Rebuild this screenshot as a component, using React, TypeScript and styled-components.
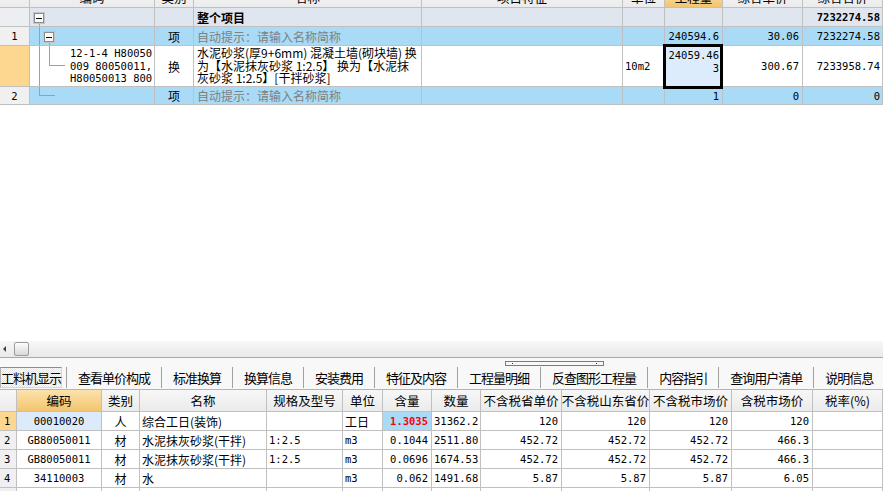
import styled, { createGlobalStyle } from 'styled-components';

const GlobalStyle = createGlobalStyle`
  html, body {
    margin: 0;
    padding: 0;
    background: #ffffff;
    overflow: hidden;
  }
  body {
    font-family: "Noto Sans CJK SC", sans-serif;
    color: #000;
  }
`;

const CJK = `"Noto Sans CJK SC", sans-serif`;
const MONO = `"DejaVu Sans Mono", "Noto Sans CJK SC", monospace`;
const GRID = '#c0c0c0';
const HEAD_BG = 'linear-gradient(#f7f7f7, #ebebeb)';
const ORANGE_HEAD = 'linear-gradient(#fbe2ae, #f4c56f)';
const ORANGE_ROW = '#fdd690';
const BLUE_ROW = '#a9dbf7';
const TOTAL_ROW = '#dfe6ef';
const NUM_BG = '#f0f0f0';

type Align = 'left' | 'center' | 'right';

const justify = (a?: Align) =>
  a === 'right' ? 'flex-end' : a === 'center' ? 'center' : 'flex-start';

const Page = styled.div`
  width: 883px;
  height: 491px;
  display: flex;
  flex-direction: column;
  overflow: hidden;
`;

const TopPane = styled.div`
  flex: none;
  height: 341px;
  overflow: hidden;
`;

const TopGrid = styled.div`
  display: grid;
  grid-template-columns: 30px 125px 39px 228px 201px 42px 58px 80px 80px;
  grid-template-rows: 20px 19px 19px 41px 18px;
  margin-top: -12px;
`;

const Cell = styled.div<{
  $align?: Align;
  $bg?: string;
  $mono?: boolean;
  $muted?: boolean;
  $bold?: boolean;
  $pad?: number;
}>`
  box-sizing: border-box;
  position: relative;
  display: flex;
  align-items: center;
  justify-content: ${(p) => justify(p.$align)};
  padding: 0 ${(p) => p.$pad ?? 3}px;
  border-right: 1px solid ${GRID};
  border-bottom: 1px solid ${GRID};
  background: ${(p) => p.$bg ?? 'transparent'};
  color: ${(p) => (p.$muted ? '#808080' : '#000')};
  font-family: ${(p) => (p.$mono ? MONO : CJK)};
  font-size: ${(p) => (p.$mono ? '10.5px' : '12px')};
  font-weight: ${(p) => (p.$bold ? 700 : 400)};
  white-space: nowrap;
  overflow: hidden;
`;

const HeadCell = styled(Cell)`
  background: ${(p) => p.$bg ?? HEAD_BG};
  font-size: 12.5px;
`;

const Lines = styled.div<{ $indent?: number }>`
  padding-left: ${(p) => p.$indent ?? 0}px;
  line-height: 12.5px;
  white-space: nowrap;
  & span {
    display: block;
    height: 12.5px;
  }
`;

const Selected = styled(Cell)`
  flex-direction: column;
  align-items: flex-end;
  justify-content: flex-start;
  padding-top: 3px;
  line-height: 12.5px;
  background: #dcecfc;
  overflow: visible;
  z-index: 1;
  &::after {
    content: '';
    position: absolute;
    top: -2px;
    bottom: -3px;
    left: -2px;
    right: -1px;
    border: 3px solid #000;
    pointer-events: none;
  }
`;

const Twig = styled.svg`
  position: absolute;
  left: 0;
  top: 0;
  width: 40px;
  height: 100%;
  overflow: visible;
  shape-rendering: crispEdges;
`;

const HScroll = styled.div`
  flex: none;
  height: 16px;
  display: flex;
  align-items: center;
  background: linear-gradient(#f7f7f7, #e9e9e9);
  border-bottom: 1px solid #a9a9a9;
`;

const ArrowLeft = styled.span`
  width: 0;
  height: 0;
  margin-left: 3px;
  border-top: 3px solid transparent;
  border-bottom: 3px solid transparent;
  border-right: 3px solid #404040;
`;

const Thumb = styled.div`
  box-sizing: border-box;
  width: 15px;
  height: 14px;
  margin-left: 8px;
  border: 1px solid #9c9c9c;
  border-radius: 2px;
  background: linear-gradient(#fdfdfd, #d8d8d8);
`;

const TabBar = styled.div`
  position: relative;
  flex: none;
  box-sizing: border-box;
  height: 32px;
  display: flex;
  align-items: flex-end;
  padding-bottom: 1px;
  background: #f8f8f8;
  border-bottom: 1px solid #b4b4b4;
`;

const Tab = styled.div<{ $active?: boolean }>`
  box-sizing: border-box;
  height: 21px;
  display: flex;
  align-items: center;
  justify-content: center;
  padding: 0 11px;
  border-left: 1px solid #a0a0a0;
  font-family: ${CJK};
  font-size: 13px;
  letter-spacing: -1px;
  color: #000;
  white-space: nowrap;
  &:last-child {
    border-right: 1px solid #a0a0a0;
  }
  ${(p) =>
    p.$active &&
    `
    width: 68px;
    padding: 0;
    margin-right: 4px;
    border: 1px solid #d8d8d8;
    border-top-color: #8c8c8c;
    border-left-color: #b0b0b0;
    background: repeating-conic-gradient(#e4e4e4 0% 25%, #ffffff 0% 50%) 0 0 / 2px 2px;
  `}
`;

const Grip = styled.div`
  position: absolute;
  left: 505px;
  top: 3px;
  box-sizing: border-box;
  width: 99px;
  height: 5px;
  border: 1px solid #7a7a7a;
  display: flex;
  align-items: center;
  justify-content: space-between;
  padding: 0 6px;
  & i {
    width: 1px;
    height: 1px;
    background: #1c2d8a;
  }
`;

const BottomGrid = styled.div`
  display: grid;
  grid-template-columns: 17px 85px 38px 127px 76px 40px 49px 49px 81px 88px 82px 81px 70px;
  grid-template-rows: 22px repeat(5, 19px);
`;

const ExpandBox = ({ x, y }: { x: number; y: number }) => (
  <g>
    <rect x={x + 0.5} y={y + 0.5} width={11} height={11} fill="#e9e9e9" stroke="#c4c4c4" />
    <rect x={x + 1.5} y={y + 1.5} width={9} height={9} fill="#fbfbfb" stroke="#8e8e8e" />
    <line x1={x + 3} x2={x + 9} y1={y + 6.5} y2={y + 6.5} stroke="#111" />
  </g>
);

type TreeKind = 'root' | 'group' | 'leaf' | 'last';

const Tree = ({ kind }: { kind: TreeKind }) => (
  <Twig>
    <g stroke="#a0a0a0" fill="none">
      {kind === 'root' && <path d="M9.5 16V19" />}
      {kind === 'group' && <path d="M9.5 0V19M19.5 16V19" />}
      {kind === 'leaf' && <path d="M9.5 0V41M19.5 0V19.5H35" />}
      {kind === 'last' && <path d="M9.5 0V8.5H25" />}
    </g>
    {kind === 'root' && <ExpandBox x={3} y={4} />}
    {kind === 'group' && <ExpandBox x={13} y={4} />}
  </Twig>
);

const topHeads = ['编码', '类别', '名称', '项目特征', '单位', '工程量', '综合单价', '综合合价'];

const tabs = [
  '工料机显示',
  '查看单价构成',
  '标准换算',
  '换算信息',
  '安装费用',
  '特征及内容',
  '工程量明细',
  '反查图形工程量',
  '内容指引',
  '查询用户清单',
  '说明信息',
];

const bottomHeads = [
  '',
  '编码',
  '类别',
  '名称',
  '规格及型号',
  '单位',
  '含量',
  '数量',
  '不含税省单价',
  '不含税山东省价',
  '不含税市场价',
  '含税市场价',
  '税率(%)',
];

const materials = [
  { code: '00010020', type: '人', name: '综合工日(装饰)', spec: '', unit: '工日', qty: '1.3035', amount: '31362.2', p1: '120', p2: '120', p3: '120', p4: '120' },
  { code: 'GB80050011', type: '材', name: '水泥抹灰砂浆(干拌)', spec: '1:2.5', unit: 'm3', qty: '0.1044', amount: '2511.80', p1: '452.72', p2: '452.72', p3: '452.72', p4: '466.3' },
  { code: 'GB80050011', type: '材', name: '水泥抹灰砂浆(干拌)', spec: '1:2.5', unit: 'm3', qty: '0.0696', amount: '1674.53', p1: '452.72', p2: '452.72', p3: '452.72', p4: '466.3' },
  { code: '34110003', type: '材', name: '水', spec: '', unit: 'm3', qty: '0.062', amount: '1491.68', p1: '5.87', p2: '5.87', p3: '5.87', p4: '6.05' },
];

const isAscii = (s: string) => /^[\x00-\x7f]*$/.test(s);

export default function App() {
  return (
    <>
      <GlobalStyle />
      <Page>
        <TopPane>
          <TopGrid>
            <HeadCell />
            {topHeads.map((h) => (
              <HeadCell key={h} $align="center" $bg={h === '工程量' ? ORANGE_HEAD : undefined}>
                {h}
              </HeadCell>
            ))}

            <Cell $bg="#eceef1" />
            <Cell $bg={TOTAL_ROW}>
              <Tree kind="root" />
            </Cell>
            <Cell $bg={TOTAL_ROW} />
            <Cell $bg={TOTAL_ROW} $bold>整个项目</Cell>
            <Cell $bg={TOTAL_ROW} />
            <Cell $bg={TOTAL_ROW} />
            <Cell $bg={TOTAL_ROW} />
            <Cell $bg={TOTAL_ROW} />
            <Cell $bg={TOTAL_ROW} $mono $bold $align="right" $pad={2}>7232274.58</Cell>

            <Cell $bg={NUM_BG} $mono $align="center">1</Cell>
            <Cell $bg={BLUE_ROW}>
              <Tree kind="group" />
            </Cell>
            <Cell $bg={BLUE_ROW} $align="center">项</Cell>
            <Cell $bg={BLUE_ROW} $muted>自动提示：请输入名称简称</Cell>
            <Cell $bg={BLUE_ROW} />
            <Cell $bg={BLUE_ROW} />
            <Cell $bg={BLUE_ROW} $mono $align="right">240594.6</Cell>
            <Cell $bg={BLUE_ROW} $mono $align="right">30.06</Cell>
            <Cell $bg={BLUE_ROW} $mono $align="right" $pad={2}>7232274.58</Cell>

            <Cell $bg={ORANGE_ROW} />
            <Cell $mono $pad={0}>
              <Tree kind="leaf" />
              <Lines $indent={40}>
                <span>12-1-4 H80050</span>
                <span>009 80050011,</span>
                <span>H80050013 800</span>
              </Lines>
            </Cell>
            <Cell $align="center">换</Cell>
            <Cell>
              <Lines>
                <span>水泥砂浆(厚9+6mm) 混凝土墙(砌块墙) 换</span>
                <span>为【水泥抹灰砂浆 1:2.5】 换为【水泥抹</span>
                <span>灰砂浆 1:2.5】[干拌砂浆]</span>
              </Lines>
            </Cell>
            <Cell />
            <Cell $mono $pad={2}>10m2</Cell>
            <Selected $mono>
              <span>24059.46</span>
              <span>3</span>
            </Selected>
            <Cell $mono $align="right">300.67</Cell>
            <Cell $mono $align="right" $pad={2}>7233958.74</Cell>

            <Cell $bg={NUM_BG} $mono $align="center">2</Cell>
            <Cell $bg={BLUE_ROW}>
              <Tree kind="last" />
            </Cell>
            <Cell $bg={BLUE_ROW} $align="center">项</Cell>
            <Cell $bg={BLUE_ROW} $muted>自动提示：请输入名称简称</Cell>
            <Cell $bg={BLUE_ROW} />
            <Cell $bg={BLUE_ROW} />
            <Cell $bg={BLUE_ROW} $mono $align="right">1</Cell>
            <Cell $bg={BLUE_ROW} $mono $align="right">0</Cell>
            <Cell $bg={BLUE_ROW} $mono $align="right" $pad={2}>0</Cell>
          </TopGrid>
        </TopPane>

        <HScroll>
          <ArrowLeft />
          <Thumb />
        </HScroll>

        <TabBar>
          <Grip>
            <i />
            <i />
          </Grip>
          {tabs.map((t, i) => (
            <Tab key={t} $active={i === 0}>
              {t}
            </Tab>
          ))}
        </TabBar>

        <BottomGrid>
          {bottomHeads.map((h, i) => (
            <HeadCell key={i} $align="center" $bg={h === '编码' ? ORANGE_HEAD : undefined}>
              {h}
            </HeadCell>
          ))}

          {materials.map((m, i) => (
            <>
              <Cell key={`n${i}`} $bg={i === 0 ? ORANGE_ROW : NUM_BG} $mono $pad={4}>
                {i + 1}
              </Cell>
              <Cell key={`c${i}`} $bg={i === 0 ? '#dcebfb' : undefined} $mono $align="center">
                {m.code}
              </Cell>
              <Cell key={`t${i}`} $align="center">{m.type}</Cell>
              <Cell key={`m${i}`} $pad={2}>{m.name}</Cell>
              <Cell key={`s${i}`} $mono $pad={2}>{m.spec}</Cell>
              <Cell key={`u${i}`} $mono={isAscii(m.unit)} $pad={2}>{m.unit}</Cell>
              {i === 0 ? (
                <Cell key={`q${i}`} $bg={BLUE_ROW} $mono $bold $align="right" style={{ color: '#ff0000' }}>
                  {m.qty}
                </Cell>
              ) : (
                <Cell key={`q${i}`} $mono $align="right">{m.qty}</Cell>
              )}
              <Cell key={`a${i}`} $mono $pad={2}>{m.amount}</Cell>
              <Cell key={`p1${i}`} $mono $align="right">{m.p1}</Cell>
              <Cell key={`p2${i}`} $mono $align="right">{m.p2}</Cell>
              <Cell key={`p3${i}`} $mono $align="right">{m.p3}</Cell>
              <Cell key={`p4${i}`} $mono $align="right">{m.p4}</Cell>
              <Cell key={`r${i}`} />
            </>
          ))}

          <Cell $bg={NUM_BG} />
          {Array.from({ length: 12 }).map((_, i) => (
            <Cell key={`e${i}`} />
          ))}
        </BottomGrid>
      </Page>
    </>
  );
}
